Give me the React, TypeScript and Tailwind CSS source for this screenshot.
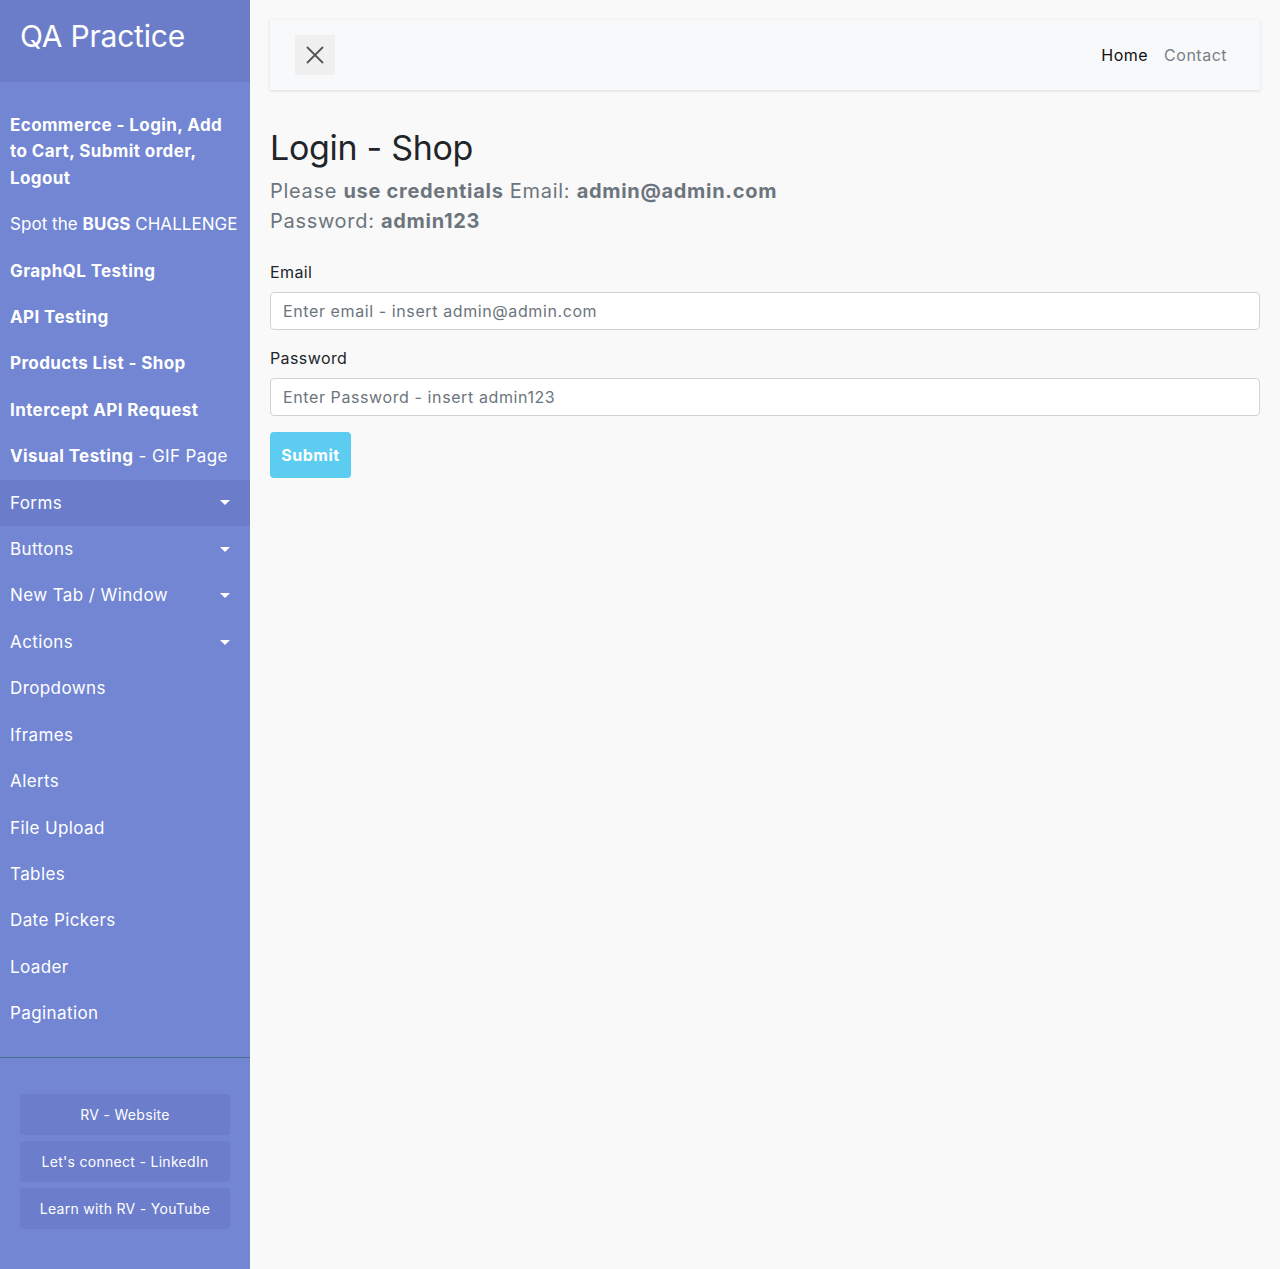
import React, { FC } from "react";

const font = { fontFamily: "Inter, 'DejaVu Sans', sans-serif" };

type NavItem = {
  label: React.ReactNode;
  caret?: boolean;
  active?: boolean;
  tight?: boolean;
};

const navItems: NavItem[] = [
  {
    label: (
      <b className="font-bold">
        Ecommerce - Login, Add
        <br />
        to Cart, Submit order,
        <br />
        Logout
      </b>
    ),
  },
  {
    label: (
      <>
        Spot the <b className="font-bold">BUGS</b> CHALLENGE
      </>
    ),
    tight: true,
  },
  { label: <b className="font-bold">GraphQL Testing</b> },
  { label: <b className="font-bold">API Testing</b> },
  { label: <b className="font-bold">Products List - Shop</b> },
  { label: <b className="font-bold">Intercept API Request</b> },
  {
    label: (
      <>
        <b className="font-bold">Visual Testing</b> - GIF Page
      </>
    ),
  },
  { label: "Forms", caret: true, active: true },
  { label: "Buttons", caret: true },
  { label: "New Tab / Window", caret: true },
  { label: "Actions", caret: true },
  { label: "Dropdowns" },
  { label: "Iframes" },
  { label: "Alerts" },
  { label: "File Upload" },
  { label: "Tables" },
  { label: "Date Pickers" },
  { label: "Loader" },
  { label: "Pagination" },
];

const Caret: FC = () => (
  <svg width="10" height="5" viewBox="0 0 10 5" className="shrink-0 mr-[16px]">
    <path d="M0 0 L10 0 L5 5 Z" fill="white" />
  </svg>
);

const Sidebar: FC = () => {
  return (
    <nav className="w-[250px] shrink-0 bg-[#7286d3] text-white flex flex-col">
      {/* Brand */}
      <div className="h-[82px] bg-[#6b7dc9] px-5 pt-[16px]">
        <h3 className="text-[30px] leading-[40px] tracking-[-0.2px]">QA Practice</h3>
      </div>

      {/* Links */}
      <ul className="pt-[20px] pb-[20px] border-b border-[#47708c]">
        {navItems.map((item, i) => (
          <li
            key={i}
            className={`flex items-center justify-between pl-[10px] pr-[4px] py-[10px] text-[17px] leading-[26.4px] whitespace-nowrap ${
              item.tight ? "tracking-[0.05px]" : "tracking-[0.4px]"
            } ${item.active ? "bg-[#6b7dca]" : ""}`}
          >
            <span>{item.label}</span>
            {item.caret && <Caret />}
          </li>
        ))}
      </ul>

      {/* Footer buttons */}
      <div className="flex flex-col gap-[6px] px-5 pt-[36px]">
        {["RV - Website", "Let's connect - LinkedIn", "Learn with RV - YouTube"].map((t) => (
          <div
            key={t}
            className="h-[41px] rounded-[4px] bg-[#6c7dcb] flex items-center justify-center text-[14px] tracking-[0.3px]"
          >
            {t}
          </div>
        ))}
      </div>
    </nav>
  );
};

const TopBar: FC = () => {
  return (
    <div className="h-[70px] bg-[#f8f9fa] shadow-[0_1px_3px_rgba(0,0,0,0.12)] flex items-center justify-between pl-[25px] pr-[33px]">
      <button className="w-[40px] h-[40px] bg-[#f0f0f0] flex items-center justify-center">
        <svg width="18" height="18" viewBox="0 0 18 18">
          <path d="M1 1 L17 17 M17 1 L1 17" stroke="#555" strokeWidth="1.8" />
        </svg>
      </button>
      <div className="flex gap-[16px] text-[16px] tracking-[0.5px]">
        <span className="text-[#111]">Home</span>
        <span className="text-[#7a7f87]">Contact</span>
      </div>
    </div>
  );
};

const LoginForm: FC = () => {
  return (
    <div className="pt-[38px]">
      <h2 className="text-[34px] leading-[40px] text-[#212529] tracking-[-0.3px]">Login - Shop</h2>
      <p className="mt-[8px] text-[20px] leading-[30px] text-[#6c757d] tracking-[0.7px]">
        Please <b className="font-bold">use credentials</b> Email: <b className="font-bold">admin@admin.com</b>
        <br />
        Password: <b className="font-bold">admin123</b>
      </p>

      <form className="mt-[24px] flex flex-col">
        <label className="text-[16px] leading-[24px] text-[#212529] tracking-[0.4px]">Email</label>
        <input
          className="mt-[8px] h-[38px] w-full rounded-[4px] border border-[#ced4da] bg-white px-[12px] text-[16px] tracking-[0.6px] text-[#495057] placeholder:text-[#6c757d] outline-none"
          placeholder="Enter email - insert admin@admin.com"
        />
        <label className="mt-[16px] text-[16px] leading-[24px] text-[#212529] tracking-[0.4px]">Password</label>
        <input
          className="mt-[8px] h-[38px] w-full rounded-[4px] border border-[#ced4da] bg-white px-[12px] text-[16px] tracking-[0.6px] text-[#495057] placeholder:text-[#6c757d] outline-none"
          placeholder="Enter Password - insert admin123"
        />
        <button
          type="button"
          className="mt-[16px] w-[81px] h-[46px] rounded-[4px] bg-[#5ccdf1] text-white font-bold text-[16px] tracking-[0.5px]"
        >
          Submit
        </button>
      </form>
    </div>
  );
};

const App: FC = () => {
  return (
    <div className="flex h-[1269px] w-full bg-[#f9f9f9]" style={font}>
      <Sidebar />
      <main className="flex-1 px-[20px] pt-[20px]">
        <TopBar />
        <LoginForm />
      </main>
    </div>
  );
};

export default App;
